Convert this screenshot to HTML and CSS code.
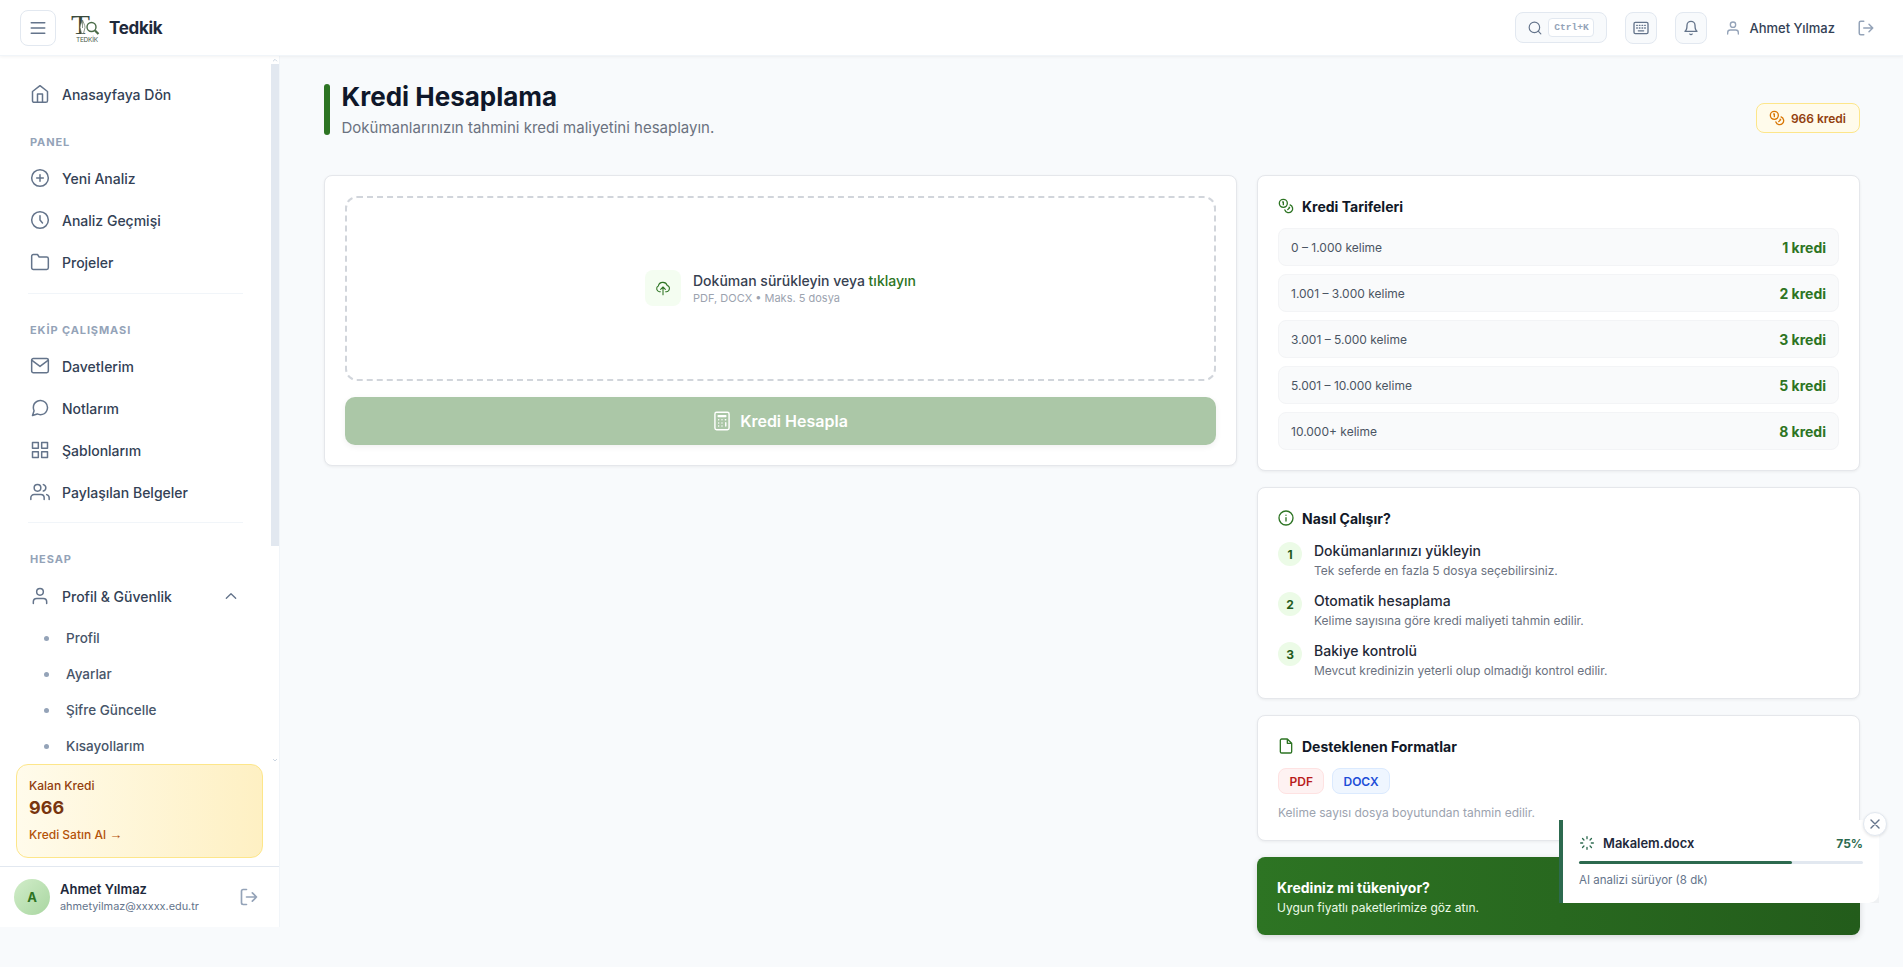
FILE: index.html
```html
<!DOCTYPE html>
<html lang="tr">
<head>
    <meta charset="UTF-8">
    <meta name="viewport" content="width=device-width, initial-scale=1.0">
    <title>Tedkik - Kredi Hesaplama</title>
    <link rel="stylesheet" href="styles.css">
</head>
<body>
    <!-- shared icons -->
    <svg class="sprite">
        <symbol id="i-user" viewBox="0 0 24 24"><path d="M20 21v-2a4 4 0 0 0-4-4H8a4 4 0 0 0-4 4v2"/><circle cx="12" cy="7" r="4"/></symbol>
        <symbol id="i-logout" viewBox="0 0 24 24"><path d="M9 21H5a2 2 0 0 1-2-2V5a2 2 0 0 1 2-2h4M16 17l5-5-5-5M21 12H9"/></symbol>
        <symbol id="i-coins" viewBox="0 0 24 24"><circle cx="8" cy="8" r="6"/><path d="M18.09 10.37A6 6 0 1 1 10.34 18M7 6h1v4M16.71 13.88l.7.71-2.82 2.82"/></symbol>
    </svg>

    <header class="header">
        <button class="menu-btn"><svg class="icon" width="18" height="18" viewBox="0 0 24 24"><path d="M3 5h18M3 12h18M3 19h18"/></svg></button>
        <svg class="logo" width="30" height="30" viewBox="0 0 30 30">
            <text class="logo-t" x="0" y="20.500" textLength="19" lengthAdjust="spacingAndGlyphs">T</text>
            <path class="logo-pen" d="M11.500 7c-1 3-2.500 5-2.500 7.500l1.500 6h2l1.500-6c0-2.500-1.500-4.500-2.500-7.500zM11.500 8v7"/>
            <circle class="logo-lens" cx="20.500" cy="14" r="4.500"/>
            <path class="logo-handle" d="M24 17.500l3.500 3.500"/>
            <text class="logo-name" x="5" y="28.500" textLength="22">TEDKİK</text>
        </svg>
        <span class="brand">Tedkik</span>
        <div class="header-right">
            <div class="search">
                <svg class="icon" width="14" height="14" viewBox="0 0 24 24"><circle cx="11" cy="11" r="9"/><path d="M22 22l-4.500-4.500"/></svg>
                <kbd>Ctrl+K</kbd>
            </div>
            <button class="tool-btn"><svg class="icon" width="16" height="16" viewBox="0 0 24 24"><rect x="1.500" y="3.500" width="21" height="17" rx="2"/><path d="M5.500 8h1M9.500 8h1M13.500 8h1M17.500 8h1M5.500 12h1M9.500 12h1M13.500 12h1M17.500 12h1M8 16.300h8"/></svg></button>
            <button class="tool-btn"><svg class="icon" width="16" height="16" viewBox="0 0 24 24"><path d="M18 8A6 6 0 0 0 6 8c0 7-3 9-3 9h18s-3-2-3-9M13.730 21a2 2 0 0 1-3.460 0"/></svg></button>
            <div class="header-user">
                <svg class="icon muted" width="16" height="16"><use href="#i-user"/></svg>
                <span>Ahmet Yılmaz</span>
            </div>
            <svg class="icon muted header-logout" width="18" height="18"><use href="#i-logout"/></svg>
        </div>
    </header>

    <div class="layout">
        <aside class="sidebar">
            <div class="sidebar-scroll">
                <nav class="nav">
                    <a class="nav-item"><svg class="icon" width="20" height="20" viewBox="0 0 24 24"><path d="M3 9l9-7 9 7v11a2 2 0 0 1-2 2H5a2 2 0 0 1-2-2z"/><path d="M9 22V12h6v10"/></svg>Anasayfaya Dön</a>
                    <div class="nav-label first">PANEL</div>
                    <a class="nav-item"><svg class="icon" width="20" height="20" viewBox="0 0 24 24"><circle cx="12" cy="12" r="10"/><path d="M12 8v8M8 12h8"/></svg>Yeni Analiz</a>
                    <a class="nav-item"><svg class="icon" width="20" height="20" viewBox="0 0 24 24"><circle cx="12" cy="12" r="10"/><path d="M12 7v5l3 3.500"/></svg>Analiz Geçmişi</a>
                    <a class="nav-item"><svg class="icon" width="20" height="20" viewBox="0 0 24 24"><path d="M22 19a2 2 0 0 1-2 2H4a2 2 0 0 1-2-2V5a2 2 0 0 1 2-2h5l2 3h9a2 2 0 0 1 2 2z"/></svg>Projeler</a>
                    <hr class="panel-end">
                    <div class="nav-label">EKİP ÇALIŞMASI</div>
                    <a class="nav-item"><svg class="icon" width="20" height="20" viewBox="0 0 24 24"><rect x="2" y="3" width="20" height="17" rx="2"/><path d="M22 5l-10 7.500L2 5"/></svg>Davetlerim</a>
                    <a class="nav-item"><svg class="icon" width="20" height="20" viewBox="0 0 24 24"><path d="M21 11.500a8.380 8.380 0 0 1-.9 3.800 8.500 8.500 0 0 1-7.600 4.700 8.380 8.380 0 0 1-3.800-.9L3 21l1.900-5.700a8.380 8.380 0 0 1-.9-3.800 8.500 8.500 0 0 1 4.700-7.600 8.380 8.380 0 0 1 3.800-.9h.5a8.480 8.480 0 0 1 8 8z"/></svg>Notlarım</a>
                    <a class="nav-item"><svg class="icon" width="20" height="20" viewBox="0 0 24 24"><path d="M3 3h7v7H3zM14 3h7v7h-7zM14 14h7v7h-7zM3 14h7v7H3z"/></svg>Şablonlarım</a>
                    <a class="nav-item"><svg class="icon" width="20" height="20" viewBox="0 0 24 24"><path d="M17 21v-2a4 4 0 0 0-4-4H5a4 4 0 0 0-4 4v2M23 21v-2a4 4 0 0 0-3-3.870M16 3.130a4 4 0 0 1 0 7.750"/><circle cx="9" cy="7" r="4"/></svg>Paylaşılan Belgeler</a>
                    <hr>
                    <div class="nav-label account">HESAP</div>
                    <a class="nav-item"><svg class="icon" width="20" height="20"><use href="#i-user"/></svg>Profil &amp; Güvenlik<svg class="icon chevron" width="16" height="16" viewBox="0 0 24 24"><path d="M19 15.500l-7-7-7 7"/></svg></a>
                    <div class="subnav">
                        <a>Profil</a>
                        <a>Ayarlar</a>
                        <a>Şifre Güncelle</a>
                        <a>Kısayollarım</a>
                    </div>
                </nav>
                <div class="scrollbar">
                    <svg class="icon" width="8" height="8" viewBox="0 0 8 8"><path d="M2.300 5L4 3.300 5.700 5"/></svg>
                    <div class="thumb"></div>
                    <svg class="icon" width="8" height="8" viewBox="0 0 8 8"><path d="M2.300 3.300L4 5l1.700-1.700"/></svg>
                </div>
            </div>
            <div class="credit-card">
                <span class="credit-label">Kalan Kredi</span>
                <strong>966</strong>
                <span class="credit-link">Kredi Satın Al <span class="arrow">→</span></span>
            </div>
            <div class="profile">
                <div class="avatar">A</div>
                <div class="profile-info">
                    <strong>Ahmet Yılmaz</strong>
                    <span>ahmetyilmaz@xxxxx.edu.tr</span>
                </div>
                <svg class="icon muted" width="20" height="20"><use href="#i-logout"/></svg>
            </div>
        </aside>

        <main class="main">
            <div class="page-head">
                <div class="page-title">
                    <div class="title-bar"></div>
                    <div>
                        <h1>Kredi Hesaplama</h1>
                        <p>Dokümanlarınızın tahmini kredi maliyetini hesaplayın.</p>
                    </div>
                </div>
                <div class="balance"><svg class="icon" width="16" height="16"><use href="#i-coins"/></svg>966 kredi</div>
            </div>

            <div class="columns">
                <section class="card upload-card">
                    <div class="dropzone">
                        <div class="drop-icon"><svg class="icon" width="16" height="16" viewBox="0 0 24 24"><path d="M8 17.500H6.500A4.500 4.500 0 0 1 5 9a7 7 0 0 1 13.400-.8A4.800 4.800 0 0 1 17.500 17.500H16M12 22V11M8.500 14l3.500-3.500 3.500 3.500"/></svg></div>
                        <div>
                            <p class="drop-title">Doküman sürükleyin veya <span>tıklayın</span></p>
                            <p class="drop-sub">PDF, DOCX • Maks. 5 dosya</p>
                        </div>
                    </div>
                    <button class="calc-btn"><svg class="icon" width="20" height="20" viewBox="0 0 24 24"><rect x="3.500" y="1.500" width="17" height="21" rx="2"/><path d="M7.500 5.500h9v1h-9zM16.500 14v4M16 10.500h.5M12 10.500h.01M8 10.500h.01M12 14.300h.01M8 14.300h.01M12 18h.01M8 18h.01"/></svg>Kredi Hesapla</button>
                </section>

                <div class="side">
                    <section class="card">
                        <h2><svg class="icon" width="16" height="16"><use href="#i-coins"/></svg>Kredi Tarifeleri</h2>
                        <div class="rates">
                            <div class="rate"><span>0 – 1.000 kelime</span><strong>1 kredi</strong></div>
                            <div class="rate"><span>1.001 – 3.000 kelime</span><strong>2 kredi</strong></div>
                            <div class="rate"><span>3.001 – 5.000 kelime</span><strong>3 kredi</strong></div>
                            <div class="rate"><span>5.001 – 10.000 kelime</span><strong>5 kredi</strong></div>
                            <div class="rate"><span>10.000+ kelime</span><strong>8 kredi</strong></div>
                        </div>
                    </section>

                    <section class="card">
                        <h2><svg class="icon" width="16" height="16" viewBox="0 0 24 24"><circle cx="12" cy="12" r="10.500"/><path d="M12 16.500v-5M12 8v-.2"/></svg>Nasıl Çalışır?</h2>
                        <div class="steps">
                            <div class="step"><b>1</b><div><h3>Dokümanlarınızı yükleyin</h3><p>Tek seferde en fazla 5 dosya seçebilirsiniz.</p></div></div>
                            <div class="step"><b>2</b><div><h3>Otomatik hesaplama</h3><p>Kelime sayısına göre kredi maliyeti tahmin edilir.</p></div></div>
                            <div class="step"><b>3</b><div><h3>Bakiye kontrolü</h3><p>Mevcut kredinizin yeterli olup olmadığı kontrol edilir.</p></div></div>
                        </div>
                    </section>

                    <section class="card">
                        <h2><svg class="icon" width="16" height="16" viewBox="0 0 24 24"><path d="M14 1.500H5.500a2 2 0 0 0-2 2v17a2 2 0 0 0 2 2h13a2 2 0 0 0 2-2V8zM14 1.500V8h6.500"/></svg>Desteklenen Formatlar</h2>
                        <div class="formats">
                            <span class="pdf">PDF</span>
                            <span class="docx">DOCX</span>
                        </div>
                        <p class="note">Kelime sayısı dosya boyutundan tahmin edilir.</p>
                    </section>

                    <section class="cta">
                        <strong>Krediniz mi tükeniyor?</strong>
                        <p>Uygun fiyatlı paketlerimize göz atın.</p>
                    </section>
                </div>
            </div>
        </main>
    </div>

    <div class="toast">
        <div class="toast-body">
            <div class="toast-head">
                <svg class="icon" width="16" height="16" viewBox="0 0 24 24"><path d="M12 2.500v3M12 18.500v3M5.300 5.300l2.100 2.100M16.600 16.600l2.100 2.100M2.500 12h3M18.500 12h3M5.300 18.700l2.100-2.100M16.600 7.400l2.100-2.100"/></svg>
                <strong>Makalem.docx</strong>
                <span>75%</span>
            </div>
            <div class="progress"><div style="width: 75%"></div></div>
            <p>AI analizi sürüyor (8 dk)</p>
        </div>
        <button class="toast-close"><svg class="icon" width="12" height="12" viewBox="0 0 24 24"><path d="M4 4l16 16M20 4L4 20"/></svg></button>
    </div>
</body>
</html>
```
FILE: styles.css
```css
*{
    padding: 0;
    margin: 0;
    box-sizing: border-box;
}
body{
    font-family: Inter, "Liberation Sans", sans-serif;
    font-size: 14px;
    background: #f8fafc;
    color: #1e293b;
    height: 967px;
    overflow: hidden;
}
button{
    font-family: inherit;
    display: flex;
    align-items: center;
    justify-content: center;
}
.sprite{
    display: none;
}
.icon{
    fill: none;
    stroke: currentColor;
    stroke-width: 2;
    stroke-linecap: round;
    stroke-linejoin: round;
    flex-shrink: 0;
}
.muted{
    color: #94a3b8;
}

/* header */
.header{
    height: 56px;
    background: #fff;
    border-bottom: 1px solid #f1f5f9;
    box-shadow: 0 1px 3px rgba(0,0,0,0.05);
    display: flex;
    align-items: center;
    padding: 0 28px 0 20px;
    position: relative;
}
.menu-btn{
    width: 36px;
    height: 36px;
    border: 1px solid #e2e8f0;
    border-radius: 8px;
    background: #fff;
    color: #64748b;
}
.logo{
    margin: 0 8px 0 15px;
    overflow: visible;
}
.logo-t{
    font: 27px "Liberation Serif", serif;
    fill: #3a4a3c;
}
.logo-pen{
    fill: #fff;
    stroke: #5b6d5c;
    stroke-width: 0.7;
}
.logo-lens{
    fill: #fff;
    stroke: #4a6b48;
    stroke-width: 1.4;
}
.logo-handle{
    stroke: #4a6b48;
    stroke-width: 2.2;
}
.logo-name{
    font: 6.5px Inter, sans-serif;
    fill: #4b5d4c;
}
.brand{
    font-size: 17px;
    font-weight: 700;
    letter-spacing: -0.3px;
}
.header-right{
    margin-left: auto;
    display: flex;
    align-items: center;
}
.search{
    display: flex;
    align-items: center;
    gap: 6px;
    width: 92px;
    height: 31px;
    padding: 0 12px;
    margin-right: 18px;
    border: 1px solid #e2e8f0;
    border-radius: 8px;
    background: #f8fafc;
    color: #64748b;
}
.search kbd{
    width: 46px;
    height: 19px;
    text-align: center;
    font: 700 9.6px/18px "Liberation Mono", monospace;
    color: #94a3b8;
    background: #fff;
    border: 1px solid #e2e8f0;
    border-radius: 4px;
}
.tool-btn{
    width: 32px;
    height: 32px;
    margin-right: 18px;
    border: 1px solid #e2e8f0;
    border-radius: 8px;
    background: #f8fafc;
    color: #64748b;
}
.header-user{
    display: flex;
    align-items: center;
    gap: 8px;
    font-size: 13px;
    font-weight: 500;
    color: #334155;
    margin-right: 22px;
}

/* sidebar */
.layout{
    display: flex;
    align-items: flex-start;
}
.sidebar{
    width: 280px;
    height: 871px;
    background: #fff;
    border-right: 1px solid #f1f5f9;
    display: flex;
    flex-direction: column;
    flex-shrink: 0;
}
.sidebar-scroll{
    height: 708px;
    display: flex;
    overflow: hidden;
}
.nav{
    flex: 1;
    padding: 17px 28px 0;
}
.nav-item{
    display: flex;
    align-items: center;
    gap: 12px;
    height: 42px;
    padding-left: 2px;
    font-size: 14px;
    font-weight: 500;
    color: #334155;
}
.nav-item .icon{
    color: #64748b;
    stroke-width: 1.8;
}
.nav-item .chevron{
    margin: 0 4px 0 auto;
    stroke-width: 2;
}
.nav-label{
    height: 16px;
    line-height: 16px;
    margin: 28px 0 7px 2px;
    font-size: 11px;
    font-weight: 700;
    letter-spacing: 0.9px;
    color: #94a3b8;
}
.nav-label.first{
    margin-top: 19px;
}
.nav-label.account{
    margin-bottom: 8px;
}
.nav hr{
    border: 0;
    height: 1px;
    background: #f1f5f9;
    margin-top: 9px;
}
.nav hr.panel-end{
    margin-top: 10px;
}
.subnav{
    padding: 3px 0 0 16px;
}
.subnav a{
    display: flex;
    align-items: center;
    gap: 17px;
    height: 36px;
    font-size: 13.5px;
    font-weight: 500;
    color: #475569;
}
.subnav a::before{
    content: "";
    width: 5px;
    height: 5px;
    border-radius: 50%;
    background: #94a3b8;
}
.scrollbar{
    width: 8px;
    display: flex;
    flex-direction: column;
    color: #cbd5e1;
}
.scrollbar .icon{
    stroke-width: 1;
}
.thumb{
    height: 482px;
    margin-bottom: auto;
    background: #e2e8f0;
}
.credit-card{
    margin: 0 16px 8px;
    height: 94px;
    border: 1px solid #fde68a;
    border-radius: 12px;
    background: linear-gradient(to right, #fffbeb, #fef0c3);
    padding: 13px 12px;
    display: flex;
    flex-direction: column;
    font-size: 12px;
    font-weight: 500;
    line-height: 16px;
}
.credit-label{
    color: #92400e;
}
.credit-card strong{
    font-size: 18px;
    line-height: 28px;
    color: #78350f;
}
.credit-link{
    color: #b45309;
    margin-top: 5px;
}
.arrow{
    font-family: "Liberation Sans", sans-serif;
    font-size: 13px;
}
.profile{
    flex: 1;
    border-top: 1px solid #e2e8f0;
    display: flex;
    align-items: center;
    gap: 10px;
    padding: 0 20px 0 14px;
}
.avatar{
    width: 36px;
    height: 36px;
    border-radius: 50%;
    background: linear-gradient(135deg, #d1edc9, #a9d6a1);
    color: #2d7423;
    font-size: 13px;
    font-weight: 700;
    display: flex;
    align-items: center;
    justify-content: center;
}
.profile-info{
    flex: 1;
    display: flex;
    flex-direction: column;
}
.profile-info strong{
    font-size: 13px;
    font-weight: 600;
    line-height: 18px;
}
.profile-info span{
    font-size: 10.9px;
    line-height: 17px;
    color: #64748b;
}

/* page */
.main{
    flex: 1;
    padding: 28px 43px 0 44px;
}
.page-head{
    display: flex;
    justify-content: space-between;
    height: 91px;
}
.page-title{
    display: flex;
    gap: 11.5px;
    height: 51px;
}
.title-bar{
    width: 6px;
    border-radius: 3px;
    background: #2d7423;
}
.page-title h1{
    font-size: 26px;
    font-weight: 700;
    line-height: 26px;
    color: #0f172a;
}
.page-title p{
    font-size: 15px;
    line-height: 22px;
    margin-top: 7px;
    color: #6b7280;
}
.balance{
    display: flex;
    align-items: center;
    gap: 6px;
    height: 30px;
    margin-top: 19px;
    padding: 0 13px 0 12px;
    border: 1px solid #fde68a;
    border-radius: 8px;
    background: #fffbeb;
    font-size: 12px;
    font-weight: 600;
    color: #92400e;
}
.balance .icon{
    color: #d97706;
}
.columns{
    display: grid;
    grid-template-columns: 913px 1fr;
    gap: 20px;
    align-items: start;
}
.card{
    background: #fff;
    border: 1px solid #e5e7eb;
    border-radius: 8px;
    padding: 20px;
    box-shadow: 0 1px 3px rgba(0,0,0,0.06);
}
.dropzone{
    height: 185px;
    border: 2px dashed #d1d5db;
    border-radius: 12px;
    display: flex;
    align-items: center;
    justify-content: center;
    gap: 12px;
}
.drop-icon{
    width: 36px;
    height: 36px;
    margin-bottom: 1px;
    border-radius: 8px;
    background: #f4fdf1;
    color: #2d7423;
    display: flex;
    align-items: center;
    justify-content: center;
}
.drop-icon .icon{
    stroke-width: 1.6;
}
.drop-title{
    font-weight: 500;
    line-height: 18px;
    color: #374151;
}
.drop-title span{
    color: #2d7423;
}
.drop-sub{
    font-size: 11px;
    line-height: 16px;
    color: #9ca3af;
}
.calc-btn{
    width: 100%;
    height: 48px;
    margin-top: 16px;
    padding-right: 1px;
    gap: 8px;
    border: 0;
    border-radius: 10px;
    background: #abc7a7;
    color: #fff;
    font-size: 16px;
    font-weight: 600;
    box-shadow: 0 2px 6px rgba(0,0,0,0.06);
}
.calc-btn .icon{
    stroke-width: 1.7;
}
.side{
    display: flex;
    flex-direction: column;
    gap: 16px;
}
.card h2{
    display: flex;
    align-items: center;
    gap: 8px;
    height: 20px;
    margin-bottom: 12px;
    font-size: 14px;
    font-weight: 700;
    color: #111827;
}
.card h2 .icon{
    color: #2d7423;
}
.rates{
    display: flex;
    flex-direction: column;
    gap: 8px;
}
.rate{
    display: flex;
    align-items: center;
    justify-content: space-between;
    height: 38px;
    padding: 0 12px;
    border: 1px solid #f3f4f6;
    border-radius: 8px;
    background: #f9fafb;
}
.rate span{
    font-size: 12px;
    color: #4b5563;
}
.rate strong{
    font-size: 14px;
    font-weight: 700;
    color: #2d7423;
}
.steps{
    display: flex;
    flex-direction: column;
    gap: 10px;
    height: 138px;
}
.step{
    display: flex;
    gap: 12px;
}
.step b{
    width: 24px;
    height: 24px;
    line-height: 25px;
    margin-top: 2px;
    text-align: center;
    border-radius: 50%;
    background: #ecfbe7;
    font-size: 12px;
    color: #235c1b;
}
.step h3{
    font-size: 14px;
    font-weight: 500;
    line-height: 22px;
    color: #1f2937;
}
.step p{
    font-size: 12px;
    line-height: 18px;
    color: #6b7280;
}
.formats{
    display: flex;
    gap: 8px;
}
.formats span{
    height: 26px;
    line-height: 25px;
    padding: 0 10px;
    border-radius: 8px;
    font-size: 12px;
    font-weight: 600;
}
.formats .pdf{
    padding: 0 10.5px;
    background: #fef2f2;
    border: 1px solid #fee2e2;
    color: #b91c1c;
}
.docx{
    background: #eff6ff;
    border: 1px solid #dbeafe;
    color: #1d4ed8;
}
.note{
    font-size: 12px;
    line-height: 14px;
    margin-top: 12px;
    color: #9ca3af;
}
.cta{
    height: 78px;
    padding: 21px 20px;
    border-radius: 8px;
    background: linear-gradient(to right, #2d7423, #235c1b);
    box-shadow: 0 2px 6px rgba(0,0,0,0.15);
    color: #fff;
    font-size: 14px;
    line-height: 20px;
}
.cta strong{
    font-weight: 700;
}
.cta p{
    font-size: 12px;
    color: #ecfbe7;
}

/* progress toast */
.toast{
    position: absolute;
    left: 1559px;
    top: 820px;
    width: 320px;
    height: 83px;
    background: linear-gradient(to right, transparent 301px, #eff1f3 301px);
}
.toast-body{
    height: 83px;
    padding: 15px 16px 0 16px;
    background: #fff;
    border-left: 4px solid #2d6a4f;
    border-radius: 0 0 10px 0;
}
.toast-head{
    display: flex;
    align-items: center;
    gap: 8px;
    height: 16px;
    font-size: 12.9px;
}
.toast-head .icon, .toast-head span{
    color: #2d6a4f;
}
.toast-head strong{
    flex: 1;
    font-weight: 600;
}
.toast-head span{
    font-size: 12px;
    font-weight: 700;
}
.progress{
    height: 3px;
    margin-top: 10px;
    border-radius: 2px;
    background: #e2e8f0;
}
.progress div{
    height: 100%;
    border-radius: 2px;
    background: #2d6a4f;
}
.toast p{
    font-size: 11.5px;
    line-height: 16px;
    margin-top: 8px;
    color: #64748b;
}
.toast-close{
    position: absolute;
    right: -8px;
    top: -8px;
    width: 24px;
    height: 24px;
    border: 1px solid #e2e8f0;
    border-radius: 50%;
    background: #fff;
    color: #64748b;
    box-shadow: 0 1px 3px rgba(0,0,0,0.1);
}
.toast-close .icon{
    stroke-width: 2.8;
}
```
